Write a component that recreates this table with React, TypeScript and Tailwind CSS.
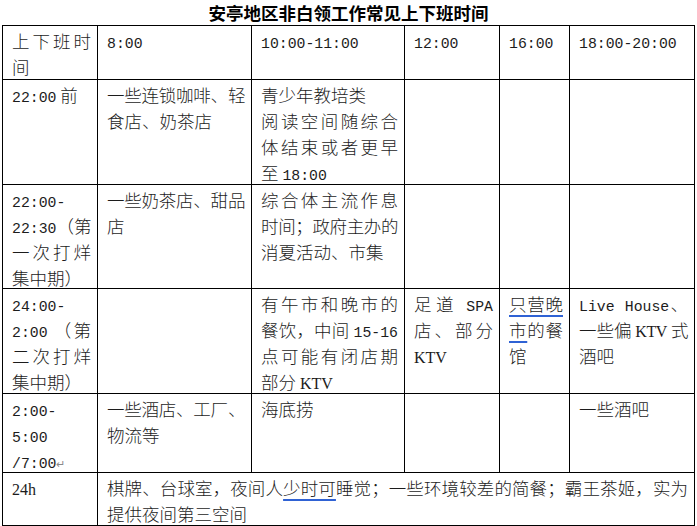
import * as React from "react";

// "=" at the start of a line: justified line, "~": justified and slightly squeezed
// ‹..› serif latin, ⟦..⟧ blue grammar underline, other ascii runs use the mono face
type Cell = { lines: string[]; span?: boolean };

const ROWS: Cell[][] = [
  [
    { lines: ["=上下班时", "间"] },
    { lines: ["8:00"] },
    { lines: ["10:00-11:00"] },
    { lines: ["12:00"] },
    { lines: ["16:00"] },
    { lines: ["18:00-20:00"] },
  ],
  [
    { lines: ["22:00 前"] },
    { lines: ["~一些连锁咖啡、轻", "食店、奶茶店"] },
    { lines: ["青少年教培类", "=阅读空间随综合", "=体结束或者更早", "至 18:00"] },
    { lines: [] },
    { lines: [] },
    { lines: [] },
  ],
  [
    { lines: ["22:00-", "=22:30（第", "=一次打烊", "集中期）"] },
    { lines: ["~一些奶茶店、甜品", "店"] },
    { lines: ["=综合体主流作息", "~时间；政府主办的", "消夏活动、市集"] },
    { lines: [] },
    { lines: [] },
    { lines: [] },
  ],
  [
    { lines: ["24:00-", "=2:00 （第", "=二次打烊", "集中期）"] },
    { lines: [] },
    { lines: ["=有午市和晚市的", "=餐饮，中间 15-16", "=点可能有闭店期", "部分 ‹KTV›"] },
    { lines: ["=足道 SPA", "=店、部分", "‹KTV›"] },
    { lines: ["=⟦只营晚⟧", "=⟦市⟧的餐", "馆"] },
    { lines: ["=Live House、", "~一些偏 ‹KTV› 式", "酒吧"] },
  ],
  [
    { lines: ["2:00-", "5:00", "/7:00↵"] },
    { lines: ["~一些酒店、工厂、", "物流等"] },
    { lines: ["海底捞"] },
    { lines: [] },
    { lines: [] },
    { lines: ["一些酒吧"] },
  ],
  [
    { lines: ["‹24h›"] },
    {
      span: true,
      lines: ["=棋牌、台球室，夜间人⟦少时可⟧睡觉；一些环境较差的简餐；霸王茶姬，实为", "提供夜间第三空间"],
    },
  ],
];

function parse(text: string): React.ReactNode[] {
  const parts = text.split(/(‹[^›]*›|⟦[^⟧]*⟧|↵)/).filter(Boolean);
  return parts.map((part, i) => {
    if (part.startsWith("‹")) {
      return (
        <span key={i} className="font-['Liberation_Serif',serif] text-[16px] leading-none">
          {part.slice(1, -1)}
        </span>
      );
    }
    if (part.startsWith("⟦")) {
      return (
        <span
          key={i}
          className="underline decoration-[#2f62d4] underline-offset-[4px] [text-decoration-thickness:1.5px]"
        >
          {parse(part.slice(1, -1))}
        </span>
      );
    }
    if (part === "↵") {
      return (
        <span key={i} className="font-['DejaVu_Sans',sans-serif] text-[11px] leading-none text-[#8a8a8a]">
          ↵
        </span>
      );
    }
    return part.split(/([\x21-\x7e]+(?: [\x21-\x7e]+)*)/).filter(Boolean).map((seg, k) =>
      /^[\x21-\x7e]/.test(seg) ? (
        <span key={`${i}-${k}`} className="font-['Liberation_Mono',monospace] text-[14.8px] leading-none">
          {seg}
        </span>
      ) : (
        <React.Fragment key={`${i}-${k}`}>{seg}</React.Fragment>
      )
    );
  });
}

function CellLine({ raw }: { raw: string }) {
  const justify = raw.startsWith("=") || raw.startsWith("~");
  const tight = raw.startsWith("~");
  const text = justify ? raw.slice(1) : raw;
  return (
    <div
      className={
        "h-[26px] whitespace-nowrap " +
        (justify ? "text-justify [text-align-last:justify] " : "") +
        (tight ? "tracking-[-0.4px]" : "")
      }
    >
      {parse(text)}
    </div>
  );
}

export default function App() {
  return (
    <div className="h-[526px] w-[697px] overflow-hidden bg-white font-['Noto_Sans_CJK_SC',sans-serif] text-[#1c1c1c]">
      <div className="flex h-[25px] items-center justify-center text-[17.5px] font-bold leading-none text-black">
        安亭地区非白领工作常见上下班时间
      </div>

      <div className="ml-[2px] grid w-fit grid-cols-[94px_153px_152px_94px_69px_124px] grid-rows-[53px_104px_103px_104px_78px_52px] gap-px bg-black p-px">
        {ROWS.map((row, r) =>
          row.map((cell, c) => (
            <div
              key={`${r}-${c}`}
              className={
                "bg-white pl-[9px] pr-[6px] pt-[2px] text-[17.5px] font-light leading-[26px] " +
                (cell.span ? "col-span-5" : "")
              }
            >
              {cell.lines.map((line, i) => (
                <CellLine key={i} raw={line} />
              ))}
            </div>
          ))
        )}
      </div>
    </div>
  );
}
